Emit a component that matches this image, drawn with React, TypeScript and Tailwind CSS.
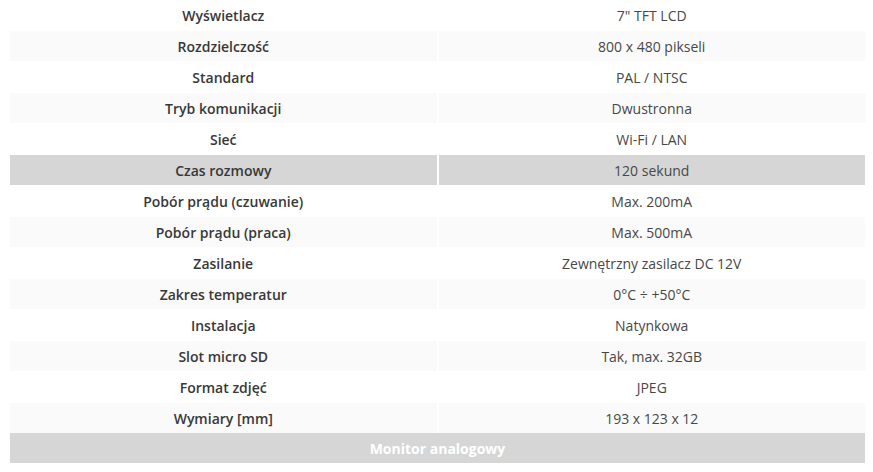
import React from 'react';

type Spec = {
  label: string;
  value: string;
  highlight?: boolean;
};

const specs: Spec[] = [
  { label: 'Wyświetlacz', value: '7" TFT LCD' },
  { label: 'Rozdzielczość', value: '800 x 480 pikseli' },
  { label: 'Standard', value: 'PAL / NTSC' },
  { label: 'Tryb komunikacji', value: 'Dwustronna' },
  { label: 'Sieć', value: 'Wi-Fi / LAN' },
  { label: 'Czas rozmowy', value: '120 sekund', highlight: true },
  { label: 'Pobór prądu (czuwanie)', value: 'Max. 200mA' },
  { label: 'Pobór prądu (praca)', value: 'Max. 500mA' },
  { label: 'Zasilanie', value: 'Zewnętrzny zasilacz DC 12V' },
  { label: 'Zakres temperatur', value: '0°C ÷ +50°C' },
  { label: 'Instalacja', value: 'Natynkowa' },
  { label: 'Slot micro SD', value: 'Tak, max. 32GB' },
  { label: 'Format zdjęć', value: 'JPEG' },
  { label: 'Wymiary [mm]', value: '193 x 123 x 12' },
];

export default function App() {
  return (
    <div className="w-[873px] h-[472px] bg-white pl-[10px] pr-[8px] font-['Open_Sans',sans-serif] text-[14px] overflow-hidden">
      {specs.map((row, i) => {
        const bg = row.highlight ? 'bg-[#d6d6d6]' : i % 2 === 1 ? 'bg-[#fafafa]' : 'bg-white';
        return (
          <div key={row.label} className="grid grid-cols-2 gap-x-[2px] h-[31px] pb-[1px]">
            <div className={`${bg} flex items-center justify-center font-semibold text-[#383838]`}>{row.label}</div>
            <div className={`${bg} flex items-center justify-center text-[#484848]`}>{row.value}</div>
          </div>
        );
      })}
      <div className="h-[30px] mt-[-1px] bg-[#d6d6d6] flex items-center justify-center font-bold text-white">
        Monitor analogowy
      </div>
    </div>
  );
}
